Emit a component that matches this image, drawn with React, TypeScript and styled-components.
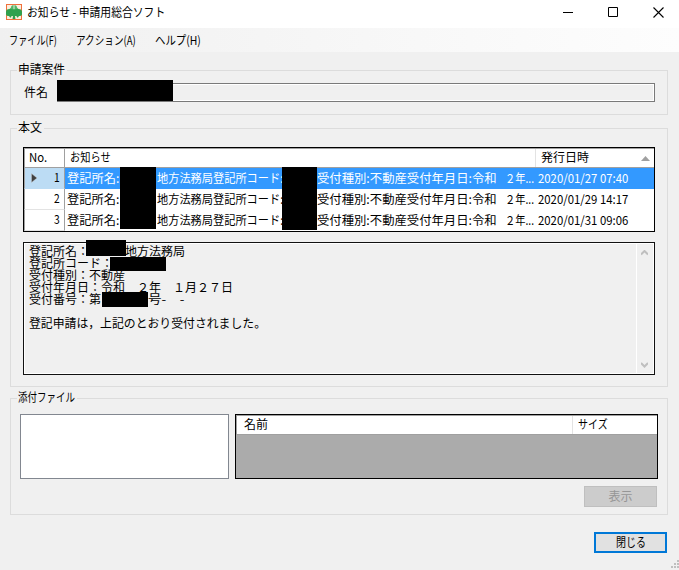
import React, { useLayoutEffect, useRef, useState } from 'react';
import styled, { createGlobalStyle } from 'styled-components';

const GlobalStyle = createGlobalStyle`
  * { box-sizing: border-box; }
  html, body { margin: 0; padding: 0; overflow: hidden; }
  body { font: 12px/12px "Noto Sans CJK JP", "Liberation Sans", sans-serif; color: #000; }
`;

const FitBox = styled.span<{ $w: number }>`
  display: block;
  flex: none;
  width: ${(p) => p.$w}px;
  height: 12px;
  white-space: pre;
`;
const FitInner = styled.span`
  display: inline-block;
  margin-top: -1px;
  transform-origin: 0 50%;
  vertical-align: top;
`;

/* Condenses a label to the width the dialog font gives it. */
function Fit({ w, children }: { w: number; children: string }) {
  const ref = useRef<HTMLSpanElement>(null);
  const [scale, setScale] = useState(1);
  useLayoutEffect(() => {
    if (ref.current && ref.current.offsetWidth) setScale(w / ref.current.offsetWidth);
  }, [w, children]);
  return (
    <FitBox $w={w}>
      <FitInner ref={ref} style={{ transform: `scaleX(${scale})` }}>{children}</FitInner>
    </FitBox>
  );
}

const Window = styled.div`
  position: relative;
  display: flex;
  flex-direction: column;
  width: 679px;
  height: 570px;
  background: #f0f0f0;
`;
const TitleBar = styled.header`
  display: flex;
  align-items: center;
  height: 28px;
  padding: 0 15px 4px 6px;
  background: #fff;
`;
const TitleText = styled.div`
  flex: 1;
  padding: 2px 0 0 5px;
`;
const WindowControls = styled.div`
  display: flex;
  gap: 35px;
`;
const MenuBar = styled.nav`
  display: flex;
  align-items: center;
  gap: 19px;
  height: 24px;
  padding: 1px 0 0 9px;
  background: linear-gradient(90deg, #f0f0f0, #fdfdfd);
`;
const Content = styled.main`
  display: flex;
  flex-direction: column;
  padding: 18px 11px 0 10px;
`;
const Group = styled.section<{ $h: number; $gap: number }>`
  display: flex;
  flex-direction: column;
  height: ${(p) => p.$h}px;
  margin-bottom: ${(p) => p.$gap}px;
  border: 1px solid #dcdcdc;
`;
const Legend = styled.div`
  align-self: flex-start;
  height: 12px;
  margin: -7px 0 0 6px;
  padding: 0 2px 0 1px;
  background: #f0f0f0;
`;
const SubjectRow = styled.div`
  display: flex;
  align-items: center;
  gap: 9px;
  padding: 7px 12px 0 13px;
`;
const SubjectField = styled.div`
  position: relative;
  flex: 1;
  height: 19px;
  border: 1px solid #7a7a7a;
  box-shadow: inset 0 0 0 1px #fff;
`;
const Redaction = styled.span<{ $x: number; $y: number; $w: number; $h: number }>`
  position: absolute;
  left: ${(p) => p.$x}px;
  top: ${(p) => p.$y}px;
  width: ${(p) => p.$w}px;
  height: ${(p) => p.$h}px;
  background: #000;
`;
const NoticeTable = styled.div`
  position: relative;
  height: 85px;
  margin: 13px 12px 0 12px;
  border: 1px solid #000;
  background: #fff;
`;
const HeaderRow = styled.div<{ $columns: string; $h: number }>`
  display: grid;
  grid-template-columns: ${(p) => p.$columns};
  height: ${(p) => p.$h}px;
  border-top: 1px solid #a0a0a0;
  border-bottom: 1px solid #a0a0a0;
  border-left: 1px solid #a0a0a0;
  background: #fff;
`;
const HeaderCell = styled.div<{ $pad: number; $line?: string }>`
  display: flex;
  align-items: center;
  justify-content: space-between;
  padding: 0 4px 0 ${(p) => p.$pad}px;
  border-right: ${(p) => (p.$line ? `1px solid ${p.$line}` : 'none')};
`;
const NoticeRow = styled.div<{ $selected?: boolean }>`
  display: grid;
  grid-template-columns: 41px 471px 1fr;
  height: 21px;
  color: ${(p) => (p.$selected ? '#fff' : '#000')};
  background: ${(p) => (p.$selected ? '#3399ff' : '#fff')};
`;
const RowHead = styled.div<{ $selected?: boolean }>`
  display: flex;
  align-items: center;
  justify-content: space-between;
  padding: 0 4px 0 6px;
  color: #000;
  border-left: 1px solid #a0a0a0;
  border-right: 1px solid #a0a0a0;
  border-bottom: 1px solid ${(p) => (p.$selected ? '#bcdcf4' : '#e3e3e3')};
  background: ${(p) => (p.$selected ? '#bcdcf4' : '#fff')};
`;
const NoticeCell = styled.div`
  display: flex;
  align-items: center;
  padding-left: 2px;
`;
const HiddenGap = styled.span<{ $w: number }>`
  flex: none;
  width: ${(p) => p.$w}px;
`;
const BodyPane = styled.div`
  position: relative;
  display: flex;
  justify-content: space-between;
  height: 133px;
  margin: 10px 12px 0 12px;
  border: 1px solid #111;
  box-shadow: inset 0 0 0 1px #fff;
`;
const BodyText = styled.div`
  padding: 3px 0 0 5px;
`;
const BodyLine = styled.div`
  display: flex;
  height: 12px;
`;
const ScrollBar = styled.div`
  display: flex;
  flex-direction: column;
  justify-content: space-between;
  width: 18px;
  padding: 7px 0 6px 4px;
  border-left: 1px solid #fff;
`;
const Attachments = styled.div`
  display: flex;
  gap: 6px;
  padding: 10px 9px 0 9px;
`;
const FileList = styled.div`
  width: 209px;
  height: 65px;
  border: 1px solid #828790;
  background: #fff;
`;
const FileTable = styled.div`
  width: 423px;
  height: 65px;
  border: 1px solid #000;
  background: #ababab;
`;
const Button = styled.button<{ $primary?: boolean }>`
  display: flex;
  align-items: center;
  justify-content: center;
  align-self: flex-end;
  width: 73px;
  height: 21px;
  padding: 0;
  font: inherit;
  color: ${(p) => (p.$primary ? '#000' : '#969696')};
  border: ${(p) => (p.$primary ? '2px solid #0078d7' : '1px solid #bfbfbf')};
  background: ${(p) => (p.$primary ? '#e1e1e1' : '#cccccc')};
  margin: ${(p) => (p.$primary ? '17px 12px 0 0' : '7px 10px 0 0')};
`;
const SizeGrip = styled.svg`
  position: absolute;
  right: 0;
  bottom: 2px;
`;

const notices = [
  { no: '1', date: '2020/01/27 07:40', selected: true },
  { no: '2', date: '2020/01/29 14:17' },
  { no: '3', date: '2020/01/31 09:06' },
];

const AppIcon = () => (
  <svg width="16" height="16" viewBox="0 0 16 16">
    <rect x="0.5" y="0.5" width="15" height="15" fill="#fbeedd" stroke="#f0703c" />
    <path d="M5 3.500Q5 1 8 1Q11 1 11 3.500L12.500 5Q12 7 8 7Q4 7 3.500 5Z" fill="#52b566" />
    <path d="M0 8Q0 5 3.500 5Q6.500 4.500 8 6Q9.500 4.500 12.500 5Q16 5 16 8V10Q16 12 13 12L12 13.500H11L10.500 12H9L9.500 15H6.500L7 12H5.500L5 13.500H4L3 12Q0 12 0 10Z" fill="#2fa14e" />
    <path d="M7.500 1h1v4h-1z" fill="#dfeedd" />
  </svg>
);

export default function App() {
  return (
    <Window>
      <GlobalStyle />
      <TitleBar>
        <AppIcon />
        <TitleText><Fit w={138}>お知らせ - 申請用総合ソフト</Fit></TitleText>
        <WindowControls>
          <svg width="10" height="12" viewBox="0 0 10 12"><path d="M0 6.500H10" stroke="#000" /></svg>
          <svg width="10" height="12" viewBox="0 0 10 12"><path d="M.5 1.500h9v9h-9z" fill="none" stroke="#000" /></svg>
          <svg width="11" height="12" viewBox="0 0 11 12"><path d="M.5 1.500l10 10M10.500 1.500l-10 10" stroke="#000" strokeWidth="1.100" /></svg>
        </WindowControls>
      </TitleBar>
      <MenuBar>
        <Fit w={48}>ファイル(F)</Fit>
        <Fit w={60}>アクション(A)</Fit>
        <Fit w={46}>ヘルプ(H)</Fit>
      </MenuBar>
      <Content>
        <Group $h={45} $gap={13}>
          <Legend><Fit w={47}>申請案件</Fit></Legend>
          <SubjectRow>
            <Fit w={24}>件名</Fit>
            <SubjectField><Redaction $x={-1} $y={-4} $w={116} $h={21} /></SubjectField>
          </SubjectRow>
        </Group>
        <Group $h={259} $gap={11}>
          <Legend><Fit w={24}>本文</Fit></Legend>
          <NoticeTable>
            <HeaderRow $columns="40px 471px 1fr" $h={20}>
              <HeaderCell $pad={4} $line="#a0a0a0"><Fit w={18}>No.</Fit></HeaderCell>
              <HeaderCell $pad={5} $line="#e3e3e3"><Fit w={41}>お知らせ</Fit></HeaderCell>
              <HeaderCell $pad={5}>
                <Fit w={48}>発行日時</Fit>
                <svg width="9" height="5" viewBox="0 0 9 5"><path d="M0 5L4.500 0L9 5Z" fill="#a0a0a0" /></svg>
              </HeaderCell>
            </HeaderRow>
            {notices.map((n) => (
              <NoticeRow key={n.no} $selected={n.selected}>
                <RowHead $selected={n.selected}>
                  <svg width="7" height="10" viewBox="0 0 7 10">
                    {n.selected && <path d="M.5.500L6 5L.5 9.500Z" fill="#404040" stroke="#d5d5d5" strokeWidth=".4" />}
                  </svg>
                  <Fit w={6}>{n.no}</Fit>
                </RowHead>
                <NoticeCell>
                  <Fit w={52}>登記所名:</Fit>
                  <HiddenGap $w={38} />
                  <Fit w={126}>地方法務局登記所コード:</Fit>
                  <HiddenGap $w={34} />
                  <Fit w={180}>受付種別:不動産受付年月日:令和</Fit>
                  <HiddenGap $w={8} />
                  <Fit w={29}>２年...</Fit>
                </NoticeCell>
                <NoticeCell><Fit w={90}>{n.date}</Fit></NoticeCell>
              </NoticeRow>
            ))}
            <Redaction $x={96} $y={19} $w={36} $h={62} />
            <Redaction $x={258} $y={19} $w={35} $h={63} />
          </NoticeTable>
          <BodyPane>
            <BodyText>
              <BodyLine><Fit w={60}>登記所名：</Fit><HiddenGap $w={36} /><Fit w={60}>地方法務局</Fit></BodyLine>
              <BodyLine><Fit w={84}>登記所コード：</Fit></BodyLine>
              <BodyLine><Fit w={96}>受付種別：不動産</Fit></BodyLine>
              <BodyLine><Fit w={204}>受付年月日：令和　２年　１月２７日</Fit></BodyLine>
              <BodyLine><Fit w={72}>受付番号：第</Fit><HiddenGap $w={47} /><Fit w={36}>号-　-</Fit></BodyLine>
              <BodyLine />
              <BodyLine><Fit w={237}>登記申請は，上記のとおり受付されました。</Fit></BodyLine>
            </BodyText>
            <ScrollBar>
              <svg width="7" height="6" viewBox="0 0 7 6"><path d="M0 4.500L3.500 1L7 4.500" fill="none" stroke="#bfbfbf" strokeWidth="2" /></svg>
              <svg width="7" height="6" viewBox="0 0 7 6"><path d="M0 1L3.500 4.500L7 1" fill="none" stroke="#bfbfbf" strokeWidth="2" /></svg>
            </ScrollBar>
            <Redaction $x={62} $y={-3} $w={40} $h={16} />
            <Redaction $x={86} $y={14} $w={56} $h={14} />
            <Redaction $x={78} $y={49} $w={46} $h={15} />
          </BodyPane>
        </Group>
        <Group $h={117} $gap={0}>
          <Legend><Fit w={57}>添付ファイル</Fit></Legend>
          <Attachments>
            <FileList />
            <FileTable>
              <HeaderRow $columns="336px 1fr" $h={20}>
                <HeaderCell $pad={7} $line="#e3e3e3"><Fit w={24}>名前</Fit></HeaderCell>
                <HeaderCell $pad={5}><Fit w={30}>サイズ</Fit></HeaderCell>
              </HeaderRow>
            </FileTable>
          </Attachments>
          <Button disabled><Fit w={24}>表示</Fit></Button>
        </Group>
      </Content>
      <Button $primary><Fit w={30}>閉じる</Fit></Button>
      <SizeGrip width="8" height="8" viewBox="0 0 8 8" fill="#bfbfbf">
        <path d="M6 0h2v2h-2zM3 3h2v2h-2zM6 3h2v2h-2zM0 6h2v2h-2zM3 6h2v2h-2zM6 6h2v2h-2z" />
      </SizeGrip>
    </Window>
  );
}
